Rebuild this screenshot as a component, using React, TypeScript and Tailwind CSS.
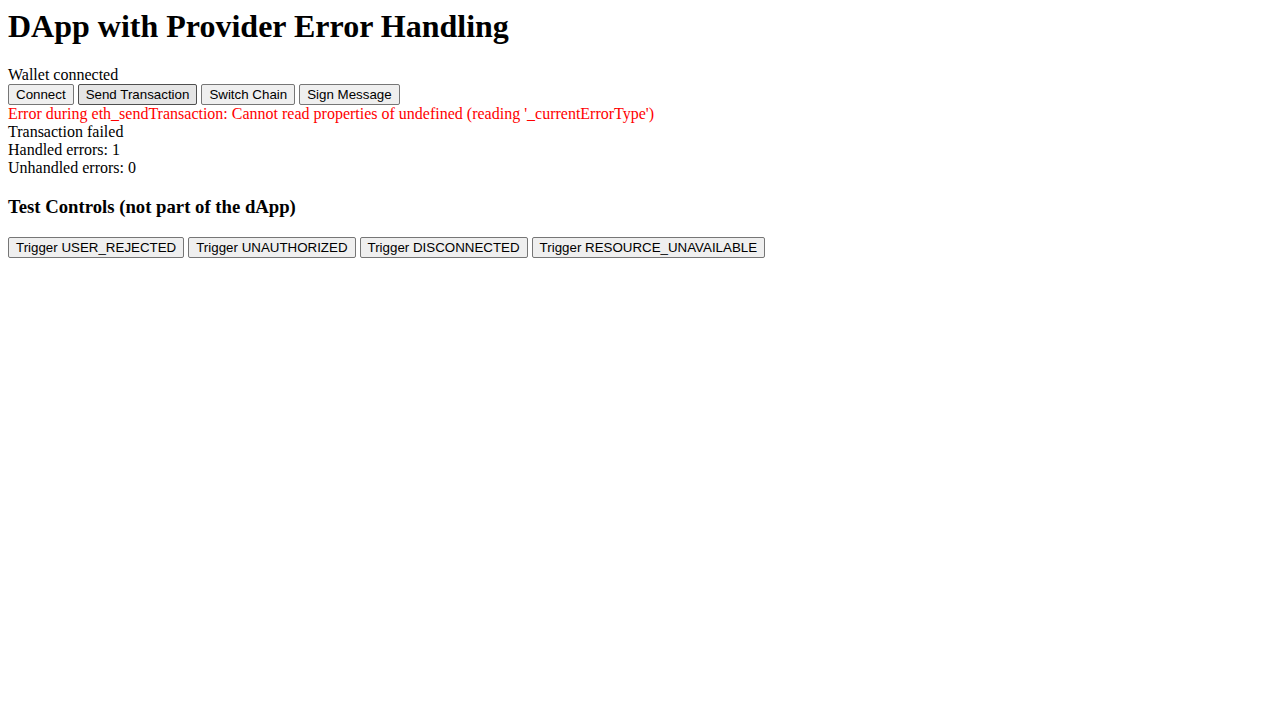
import React from "react";

const btn =
  "border border-solid border-[#767676] bg-[#efefef] rounded-[2px] px-[7px] py-[2px] text-[13.333px] leading-[normal] text-black [font-family:'Liberation_Sans',Arial,sans-serif]";
const btnHover =
  "border border-solid border-[#4f4f4f] bg-[#e5e5e5] rounded-[2px] px-[7px] py-[2px] text-[13.333px] leading-[normal] text-black [font-family:'Liberation_Sans',Arial,sans-serif]";

export default function App() {
  return (
    <div className="bg-white min-h-[720px] p-2 text-black text-[16px] leading-[normal] [font-family:'Liberation_Serif','Times_New_Roman',serif]">
      <h1 className="text-[32px] font-bold mt-0 mb-[21.44px] leading-[normal]">DApp with Provider Error Handling</h1>
      <div>Wallet connected</div>
      <div className="flex gap-1 items-start">
        <button className={btn}>Connect</button>
        <button className={btnHover}>Send Transaction</button>
        <button className={btn}>Switch Chain</button>
        <button className={btn}>Sign Message</button>
      </div>
      <div className="text-[#ff0000]">
        Error during eth_sendTransaction: Cannot read properties of undefined (reading '_currentErrorType')
      </div>
      <div>Transaction failed</div>
      <div>Handled errors: 1</div>
      <div>Unhandled errors: 0</div>
      <h3 className="text-[18.72px] font-bold my-[18.72px] leading-[normal]">Test Controls (not part of the dApp)</h3>
      <div className="flex gap-1 items-start">
        <button className={btn}>Trigger USER_REJECTED</button>
        <button className={btn}>Trigger UNAUTHORIZED</button>
        <button className={btn}>Trigger DISCONNECTED</button>
        <button className={btn}>Trigger RESOURCE_UNAVAILABLE</button>
      </div>
    </div>
  );
}
